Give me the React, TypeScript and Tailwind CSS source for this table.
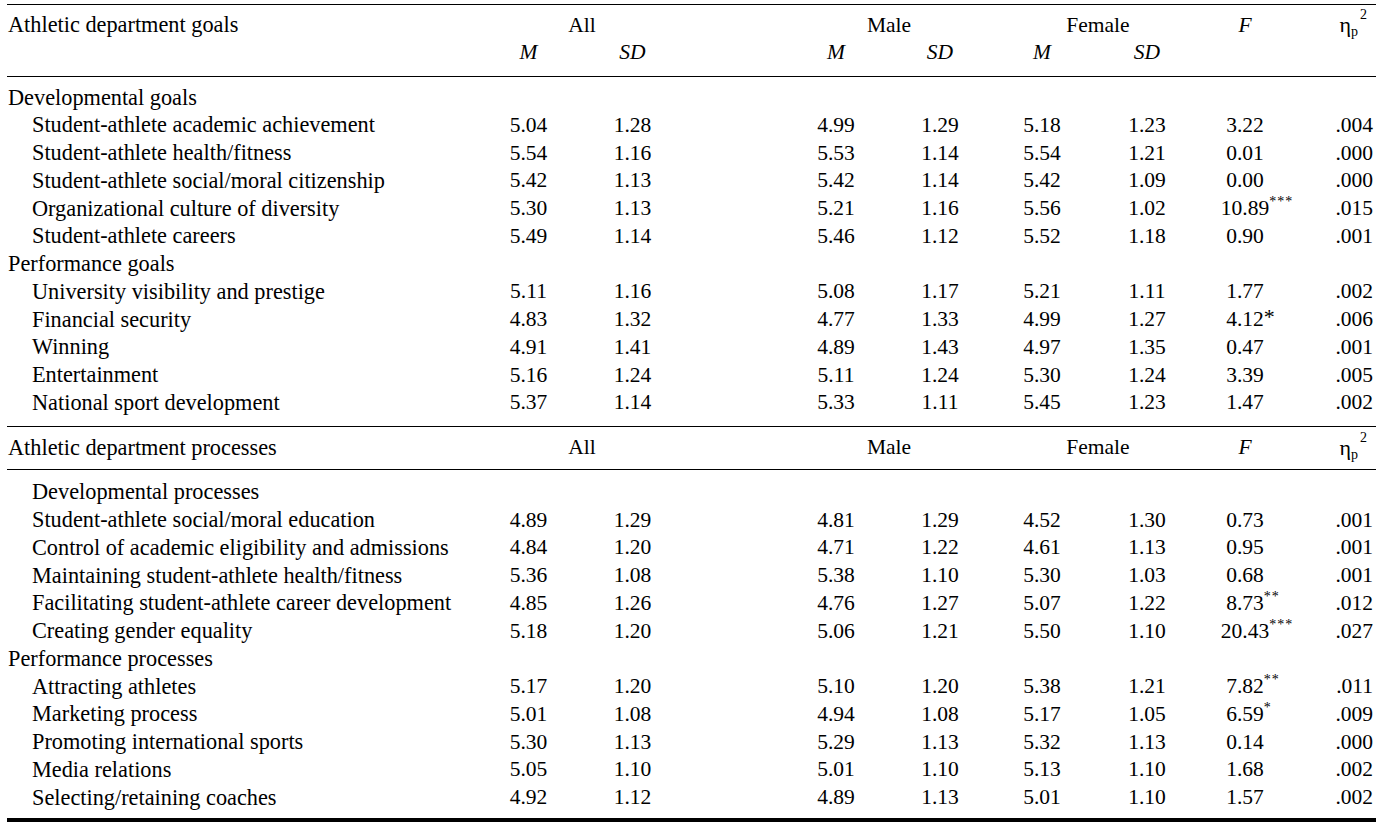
import React from "react";

type Stat = [string, string, string, string, string, string, string, string];

type Item = { label: string; sub?: boolean; indent?: boolean; v?: Stat; star?: string; bigStar?: boolean };

const cols =
  "grid grid-cols-[471px_101px_107px_99px_102px_106px_98px_112px_84px_89px] items-center h-[27.75px]";

const goals: Item[] = [
  { label: "Developmental goals", sub: true },
  { label: "Student-athlete academic achievement", indent: true, v: ["5.04", "1.28", "4.99", "1.29", "5.18", "1.23", "3.22", ".004"] },
  { label: "Student-athlete health/fitness", indent: true, v: ["5.54", "1.16", "5.53", "1.14", "5.54", "1.21", "0.01", ".000"] },
  { label: "Student-athlete social/moral citizenship", indent: true, v: ["5.42", "1.13", "5.42", "1.14", "5.42", "1.09", "0.00", ".000"] },
  { label: "Organizational culture of diversity", indent: true, v: ["5.30", "1.13", "5.21", "1.16", "5.56", "1.02", "10.89", ".015"], star: "***" },
  { label: "Student-athlete careers", indent: true, v: ["5.49", "1.14", "5.46", "1.12", "5.52", "1.18", "0.90", ".001"] },
  { label: "Performance goals", sub: true },
  { label: "University visibility and prestige", indent: true, v: ["5.11", "1.16", "5.08", "1.17", "5.21", "1.11", "1.77", ".002"] },
  { label: "Financial security", indent: true, v: ["4.83", "1.32", "4.77", "1.33", "4.99", "1.27", "4.12", ".006"], star: "*", bigStar: true },
  { label: "Winning", indent: true, v: ["4.91", "1.41", "4.89", "1.43", "4.97", "1.35", "0.47", ".001"] },
  { label: "Entertainment", indent: true, v: ["5.16", "1.24", "5.11", "1.24", "5.30", "1.24", "3.39", ".005"] },
  { label: "National sport development", indent: true, v: ["5.37", "1.14", "5.33", "1.11", "5.45", "1.23", "1.47", ".002"] },
];

const processes: Item[] = [
  { label: "Developmental processes", sub: true, indent: true },
  { label: "Student-athlete social/moral education", indent: true, v: ["4.89", "1.29", "4.81", "1.29", "4.52", "1.30", "0.73", ".001"] },
  { label: "Control of academic eligibility and admissions", indent: true, v: ["4.84", "1.20", "4.71", "1.22", "4.61", "1.13", "0.95", ".001"] },
  { label: "Maintaining student-athlete health/fitness", indent: true, v: ["5.36", "1.08", "5.38", "1.10", "5.30", "1.03", "0.68", ".001"] },
  { label: "Facilitating student-athlete career development", indent: true, v: ["4.85", "1.26", "4.76", "1.27", "5.07", "1.22", "8.73", ".012"], star: "**" },
  { label: "Creating gender equality", indent: true, v: ["5.18", "1.20", "5.06", "1.21", "5.50", "1.10", "20.43", ".027"], star: "***" },
  { label: "Performance processes", sub: true },
  { label: "Attracting athletes", indent: true, v: ["5.17", "1.20", "5.10", "1.20", "5.38", "1.21", "7.82", ".011"], star: "**" },
  { label: "Marketing process", indent: true, v: ["5.01", "1.08", "4.94", "1.08", "5.17", "1.05", "6.59", ".009"], star: "*" },
  { label: "Promoting international sports", indent: true, v: ["5.30", "1.13", "5.29", "1.13", "5.32", "1.13", "0.14", ".000"] },
  { label: "Media relations", indent: true, v: ["5.05", "1.10", "5.01", "1.10", "5.13", "1.10", "1.68", ".002"] },
  { label: "Selecting/retaining coaches", indent: true, v: ["4.92", "1.12", "4.89", "1.13", "5.01", "1.10", "1.57", ".002"] },
];

const Eta = () => (
  <span className="inline-flex items-start">
    <span className="text-[22px]">η</span>
    <span className="text-[14px] mt-[13px]">p</span>
    <span className="text-[14px] -mt-[4px] ml-[2px]">2</span>
  </span>
);

const Row = ({ item }: { item: Item }) => {
  const v = item.v;
  return (
    <div className={cols}>
      <div className={item.indent ? "pl-[25px] whitespace-nowrap text-[22.3px]" : "pl-px whitespace-nowrap text-[22.3px]"}>
        {item.label}
      </div>
      {v && (
        <>
          <div className="text-center">{v[0]}</div>
          <div className="text-center">{v[1]}</div>
          <div />
          <div className="text-center">{v[2]}</div>
          <div className="text-center">{v[3]}</div>
          <div className="text-center">{v[4]}</div>
          <div className="text-center">{v[5]}</div>
          <div className="text-center">
            <span className="relative">
              {v[6]}
              {item.star && (
                <span
                  className={
                    item.bigStar
                      ? "absolute left-full -top-[7px] text-[22px]"
                      : "absolute left-full -top-[5px] text-[14px] tracking-[1px]"
                  }
                >
                  {item.star}
                </span>
              )}
            </span>
          </div>
          <div className="text-right pr-[3px]">{v[7]}</div>
        </>
      )}
    </div>
  );
};

export default function App() {
  return (
    <div className="bg-white min-h-screen pt-[4px] text-black text-[21.5px] font-['Liberation_Serif',serif]">
      <div className="w-[1369px] ml-[7px] border-t border-black">
        <div className="pt-[3px] pb-[12px] border-b border-black">
          <div className={cols}>
            <div className="pl-px text-[22.3px]">Athletic department goals</div>
            <div className="col-span-2 text-center">All</div>
            <div />
            <div className="col-span-2 text-center">Male</div>
            <div className="col-span-2 text-center">Female</div>
            <div className="text-center italic">F</div>
            <div className="text-right pr-[9px]">
              <Eta />
            </div>
          </div>
          <div className={cols}>
            <div />
            <div className="text-center italic">M</div>
            <div className="text-center italic">SD</div>
            <div />
            <div className="text-center italic">M</div>
            <div className="text-center italic">SD</div>
            <div className="text-center italic">M</div>
            <div className="text-center italic">SD</div>
            <div />
            <div />
          </div>
        </div>
        <div className="pt-[4px] pb-[12px] border-b border-black">
          {goals.map((g) => (
            <Row key={g.label} item={g} />
          ))}
        </div>
        <div className="pt-[4px] pb-[11px] border-b border-black">
          <div className={cols}>
            <div className="pl-px text-[22.3px]">Athletic department processes</div>
            <div className="col-span-2 text-center">All</div>
            <div />
            <div className="col-span-2 text-center">Male</div>
            <div className="col-span-2 text-center">Female</div>
            <div className="text-center italic">F</div>
            <div className="text-right pr-[9px]">
              <Eta />
            </div>
          </div>
        </div>
        <div className="pt-[5px] pb-[10px] border-b-4 border-black">
          {processes.map((g) => (
            <Row key={g.label} item={g} />
          ))}
        </div>
      </div>
    </div>
  );
}
